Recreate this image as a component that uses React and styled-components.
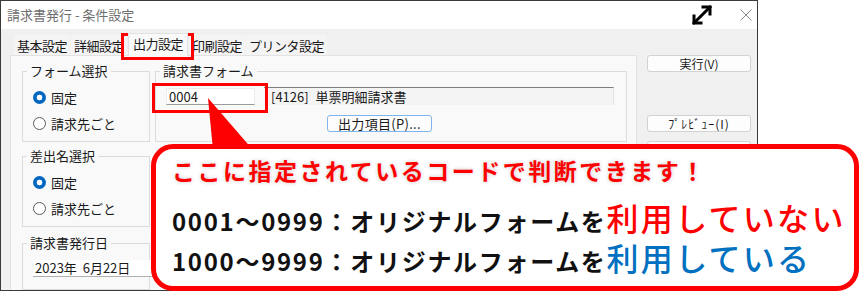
import styled, { createGlobalStyle } from 'styled-components';

const GlobalStyle = createGlobalStyle`
    body {
        margin: 0;
        background: #ffffff;
        font-family: "Noto Sans CJK JP", "Noto Sans", sans-serif;
        color: #1a1a1a;
    }
`;

const Stage = styled.div`
    position: relative;
    width: 865px;
    height: 303px;
    overflow: hidden;
    background: #ffffff;
`;

const Window = styled.div`
    display: flex;
    flex-direction: column;
    width: 758px;
    height: 291px;
    box-sizing: border-box;
    border: 1px solid #3a3a3a;
    overflow: hidden;
    background: #f0f0f0;
`;

const TitleBar = styled.div`
    display: flex;
    align-items: center;
    height: 28px;
    padding: 0 5px 0 6px;
    background: #ffffff;
    flex-shrink: 0;
`;

const Title = styled.span`
    font-size: 13px;
    line-height: 16px;
    color: #6e6e6e;
`;

const TitleIcons = styled.div`
    display: flex;
    align-items: center;
    gap: 27px;
    margin-left: auto;
`;

const WindowBody = styled.div`
    display: flex;
    flex: 1;
    min-height: 0;
`;

const Main = styled.div`
    display: flex;
    flex-direction: column;
    width: 636px;
    padding-left: 9px;
    box-sizing: border-box;
`;

const TabStrip = styled.div`
    display: flex;
    align-items: flex-end;
    gap: 1px;
    height: 29px;
    padding-left: 4px;
`;

const Tab = styled.div`
    height: ${(p) => (p.$active ? '23px' : '20px')};
    padding: ${(p) => (p.$active ? '2px 4px 0' : '3px 3px 0')};
    box-sizing: border-box;
    font-size: 13px;
    line-height: 16px;
    letter-spacing: -0.5px;
    color: #1a1a1a;
    background: ${(p) => (p.$active ? '#f9f9f9' : '#f4f4f4')};
    border: ${(p) => (p.$active ? '1px solid #e2e2e2' : 'none')};
    border-bottom: none;
    margin-bottom: ${(p) => (p.$active ? '-1px' : '0')};
    position: relative;
    z-index: ${(p) => (p.$active ? 1 : 0)};
`;

const Panel = styled.div`
    display: flex;
    gap: 5px;
    flex: 1;
    padding: 7px 9px 0 11px;
    background: #f9f9f9;
    border: 1px solid #e2e2e2;
    border-bottom: none;
`;

const Column = styled.div`
    display: flex;
    flex-direction: column;
    width: ${(p) => p.$width}px;
`;

const Group = styled.fieldset`
    margin: ${(p) => p.$top || 0}px 0 0;
    padding: ${(p) => p.$pad || '5px 10px 5px'};
    border: 1px solid #dcdcdc;
    min-width: 0;
    box-sizing: border-box;
`;

const Legend = styled.legend`
    margin-left: -6px;
    padding: 0 3px;
    font-size: 13px;
    line-height: 16px;
    color: #1a1a1a;
`;

const RadioRow = styled.label`
    display: flex;
    align-items: center;
    gap: 5px;
    height: 26px;
    font-size: 13px;
    color: #1a1a1a;
`;

const Radio = styled.span`
    width: 13px;
    height: 13px;
    border-radius: 50%;
    box-sizing: border-box;
    flex-shrink: 0;
    border: ${(p) => (p.$checked ? 'none' : '1px solid #5a5a5a')};
    background: ${(p) =>
        p.$checked ? 'radial-gradient(circle, #ffffff 0 2.6px, #0067c0 3.2px)' : '#ffffff'};
`;

const DateField = styled.div`
    width: 120px;
    height: 17px;
    box-sizing: border-box;
    padding-left: 2px;
    background: #ffffff;
    border-bottom: 1px solid #b0b0b0;
    font-size: 13px;
    line-height: 16px;
`;

const FormRow = styled.div`
    display: flex;
    align-items: flex-start;
    gap: 9px;
    height: 18px;
`;

const CodeInput = styled.div`
    width: 89px;
    height: 17px;
    margin-top: 1px;
    box-sizing: border-box;
    padding-left: 2px;
    background: #ffffff;
    border: 1px solid #ececec;
    border-bottom-color: #9a9a9a;
    font-size: 13px;
    line-height: 15px;
`;

const FormName = styled.div`
    width: 350px;
    height: 18px;
    box-sizing: border-box;
    padding-left: 7px;
    background: #f4f4f4;
    border-top: 1px solid #7d7d7d;
    border-right: 1px solid #e4e4e4;
    font-size: 13px;
    line-height: 17px;
    word-spacing: 4px;
`;

const DialogButton = styled.div`
    width: 105px;
    height: 17px;
    margin: 10px 0 0 161px;
    box-sizing: border-box;
    border: 1px solid #7fb5ea;
    border-radius: 3px;
    background: #fdfdfd;
    font-size: 13px;
    line-height: 15px;
    text-align: center;
    letter-spacing: 0.3px;
`;

const ButtonCol = styled.div`
    display: flex;
    flex-direction: column;
    width: 104px;
    margin-left: 10px;
    padding-top: 26px;
`;

const SideButton = styled.div`
    height: 17px;
    margin-top: ${(p) => p.$gap || 0}px;
    box-sizing: border-box;
    border: 1px solid #d2d2d2;
    border-radius: 3px;
    background: #fdfdfd;
    font-size: 12px;
    line-height: 15px;
    text-align: center;
    letter-spacing: ${(p) => p.$spacing || 0}px;
`;

const Highlight = styled.div`
    position: absolute;
    left: ${(p) => p.$x}px;
    top: ${(p) => p.$y}px;
    width: ${(p) => p.$w}px;
    height: ${(p) => p.$h}px;
    box-sizing: border-box;
    border: 3px solid #ff0000;
`;

const Tail = styled.svg`
    position: absolute;
    left: 0;
    top: 0;
`;

const Callout = styled.div`
    position: absolute;
    left: 151px;
    top: 144px;
    width: 708px;
    height: 147px;
    box-sizing: border-box;
    padding: 6px 0 0 16px;
    border: 5px solid #ff0000;
    border-radius: 22px;
    background: #ffffff;
    font-weight: 700;
`;

const Headline = styled.div`
    height: 30px;
    margin-bottom: 12px;
    font-size: 23px;
    line-height: 30px;
    letter-spacing: 2.5px;
    color: #ff0000;
    text-shadow: 0 0 4px rgba(0, 0, 0, 0.22);
    white-space: nowrap;
`;

const RangeLine = styled.div`
    display: flex;
    align-items: baseline;
    height: 40px;
    white-space: nowrap;
`;

const RangeLabel = styled.span`
    font-size: 24px;
    line-height: 32px;
    letter-spacing: 1.7px;
    color: #111111;
`;

const Usage = styled.span`
    font-size: 32px;
    line-height: 40px;
    letter-spacing: 2.3px;
    font-weight: 500;
    color: ${(p) => p.$color};
`;

const ResizeIcon = () => (
    <svg width="22" height="22" viewBox="0 0 22 22">
        <g fill="none" stroke="#000" strokeWidth="3" strokeLinecap="square">
            <line x1="3" y1="19" x2="19" y2="3" />
            <polyline points="3,12 3,19 10,19" />
            <polyline points="12,3 19,3 19,10" />
        </g>
    </svg>
);

const CloseIcon = () => (
    <svg width="12" height="12" viewBox="0 0 12 12">
        <g stroke="#8a8a8a" strokeWidth="1">
            <line x1="0.5" y1="0.5" x2="11.5" y2="11.5" />
            <line x1="11.5" y1="0.5" x2="0.5" y2="11.5" />
        </g>
    </svg>
);

const tabs = ['基本設定', '詳細設定', '出力設定', '印刷設定', 'プリンタ設定'];

export default function App() {
    return (
        <Stage>
            <GlobalStyle />
            <Window>
                <TitleBar>
                    <Title>請求書発行 - 条件設定</Title>
                    <TitleIcons>
                        <ResizeIcon />
                        <CloseIcon />
                    </TitleIcons>
                </TitleBar>
                <WindowBody>
                    <Main>
                        <TabStrip>
                            {tabs.map((t) => (
                                <Tab key={t} $active={t === '出力設定'}>
                                    {t}
                                </Tab>
                            ))}
                        </TabStrip>
                        <Panel>
                            <Column $width={128}>
                                <Group>
                                    <Legend>フォーム選択</Legend>
                                    <RadioRow>
                                        <Radio $checked />
                                        固定
                                    </RadioRow>
                                    <RadioRow>
                                        <Radio />
                                        請求先ごと
                                    </RadioRow>
                                </Group>
                                <Group $top={6}>
                                    <Legend>差出名選択</Legend>
                                    <RadioRow>
                                        <Radio $checked />
                                        固定
                                    </RadioRow>
                                    <RadioRow>
                                        <Radio />
                                        請求先ごと
                                    </RadioRow>
                                </Group>
                                <Group $top={8} $pad="9px 10px 12px">
                                    <Legend>請求書発行日</Legend>
                                    <DateField>2023年&nbsp;&nbsp;6月22日</DateField>
                                </Group>
                            </Column>
                            <Column $width={472}>
                                <Group $pad="8px 10px 9px">
                                    <Legend>請求書フォーム</Legend>
                                    <FormRow>
                                        <CodeInput>0004</CodeInput>
                                        <FormName>[4126] 単票明細請求書</FormName>
                                    </FormRow>
                                    <DialogButton>出力項目(P)...</DialogButton>
                                </Group>
                            </Column>
                        </Panel>
                    </Main>
                    <ButtonCol>
                        <SideButton>実行(V)</SideButton>
                        <SideButton $gap={43} $spacing={1}>
                            ﾌﾟﾚﾋﾞｭｰ(I)
                        </SideButton>
                        <SideButton $gap={9}>ﾍﾟｰｼﾞ設定(U)</SideButton>
                    </ButtonCol>
                </WindowBody>
            </Window>

            <Highlight $x={121} $y={33} $w={73} $h={27} />
            <Highlight $x={152} $y={83} $w={116} $h={30} />
            <Tail width="865" height="303">
                <polygon points="208,98 213,150 253,150" fill="#ff0000" />
            </Tail>
            <Callout>
                <Headline>ここに指定されているコードで判断できます！</Headline>
                <RangeLine>
                    <RangeLabel>0001～0999：オリジナルフォームを</RangeLabel>
                    <Usage $color="#ff0000">利用していない</Usage>
                </RangeLine>
                <RangeLine>
                    <RangeLabel>1000～9999：オリジナルフォームを</RangeLabel>
                    <Usage $color="#0070c0">利用している</Usage>
                </RangeLine>
            </Callout>
        </Stage>
    );
}
